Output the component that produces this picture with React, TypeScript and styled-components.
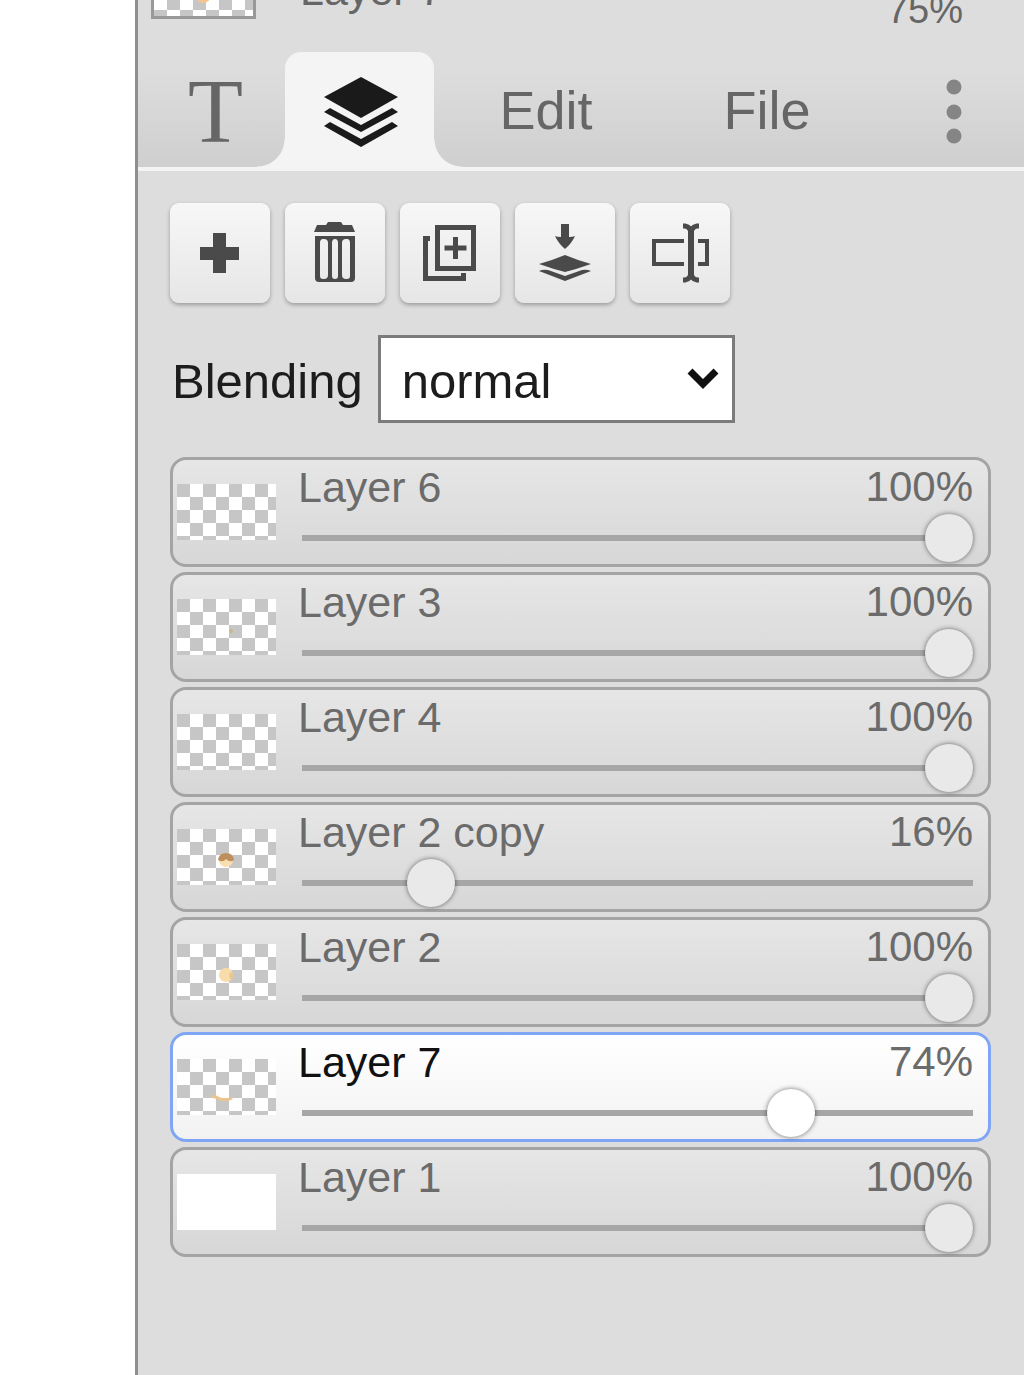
import React, { useState } from "react";
import styled, { createGlobalStyle, css } from "styled-components";

const GlobalStyle = createGlobalStyle`
  *, *::before, *::after { box-sizing: border-box; }
  body {
    margin: 0;
    background: #fff;
    font-family: "Liberation Sans", Arial, Helvetica, sans-serif;
  }
`;

const Workspace = styled.div`
  display: flex;
  min-height: 100vh;
  padding-left: 135px;
`;

const Panel = styled.aside`
  flex: 1;
  min-width: 0;
  border-left: 3px solid #8f8f8f;
  background: #ddd;
`;

const checker = css`
  background: repeating-conic-gradient(#fff 0 25%, #c6c6c6 0 50%) 0 0 / 26px 26px;
`;

const ToolSummary = styled.header`
  display: flex;
  align-items: flex-end;
  height: 52px;
  padding: 0 61px 20px 13px;
  overflow: hidden;
  color: #666;
  line-height: 44px;
`;

const SummaryThumb = styled.svg`
  width: 105px;
  height: 60px;
  margin-bottom: 13px;
  border: 3px solid #999;
  ${checker}
  background-position: 0 22px;
`;

const SummaryName = styled.span`
  flex: 1;
  padding-left: 44px;
  margin-bottom: 20px;
  font-size: 43px;
`;

const SummaryValue = styled.span`
  font-size: 38px;
`;

const TabBar = styled.nav`
  display: grid;
  grid-template-columns: 147fr 149fr 224fr 218fr 148fr;
  height: 119px;
  border-bottom: 4px solid #f4f4f4;
  background: linear-gradient(#ddd 15%, #cfcfcf);
`;

const Tab = styled.button<{ $active?: boolean; $serif?: boolean; $outer?: boolean }>`
  position: relative;
  display: flex;
  align-items: center;
  justify-content: center;
  padding: ${(p) => (p.$outer ? "4px 0 0 8px" : p.$active ? "4px 0 0 2px" : "0")};
  border: 0;
  border-radius: 16px 16px 0 0;
  background: ${(p) => (p.$active ? "#f4f4f4" : "transparent")};
  color: #666;
  font-family: ${(p) => (p.$serif ? '"Liberation Serif", "Times New Roman", serif' : "inherit")};
  font-size: ${(p) => (p.$serif ? 90 : 54)}px;
  line-height: 1;
  cursor: pointer;

  ${(p) =>
    p.$active &&
    css`
      &::before,
      &::after {
        content: "";
        position: absolute;
        bottom: 0;
        width: 28px;
        height: 28px;
      }
      &::before {
        right: 100%;
        background: radial-gradient(circle at 0 0, transparent 27px, #f4f4f4 28px);
      }
      &::after {
        left: 100%;
        background: radial-gradient(circle at 100% 0, transparent 27px, #f4f4f4 28px);
      }
    `}
`;

const Content = styled.div`
  display: flex;
  flex-direction: column;
  gap: 32px;
  padding: 32px 33px 32px 32px;
`;

const Toolbar = styled.div`
  display: flex;
  gap: 15px;
`;

const ToolButton = styled.button`
  display: grid;
  place-items: center;
  width: 100px;
  height: 100px;
  padding: 0;
  border: 0;
  border-radius: 9px;
  background: linear-gradient(#f7f7f7, #e6e6e6);
  box-shadow: 0 2px 4px rgba(0, 0, 0, 0.3);
  color: #4a4a4a;
  cursor: pointer;
`;

const BlendRow = styled.div`
  display: flex;
  align-items: center;
  gap: 15px;
  padding-left: 2px;
  color: #1c1c1c;
  font-size: 49px;
`;

const BlendLabel = styled.label`
  padding-top: 3px;
`;

const SelectWrap = styled.div`
  position: relative;
  flex: 0 1 357px;
`;

const Select = styled.select`
  appearance: none;
  display: block;
  width: 100%;
  height: 88px;
  padding: 3px 60px 0 21px;
  border: 3px solid #7b7b7b;
  border-radius: 0;
  background: #fff;
  color: #1c1c1c;
  font: inherit;
`;

const Chevron = styled.svg`
  position: absolute;
  top: 32px;
  right: 16px;
  pointer-events: none;
`;

const LayerList = styled.ul`
  display: flex;
  flex-direction: column;
  gap: 5px;
  margin: 2px 0 0;
  padding: 0;
  list-style: none;
`;

const LayerRow = styled.li<{ $selected: boolean }>`
  display: grid;
  grid-template-columns: 99px 1fr;
  align-items: center;
  column-gap: 22px;
  padding: 2px 15px 2px 4px;
  border: 3px solid ${(p) => (p.$selected ? "#7ea6f4" : "#a4a4a4")};
  border-radius: 16px;
  background: ${(p) =>
    p.$selected ? "linear-gradient(#fff, #f2f2f2)" : "linear-gradient(#e6e6e6, #d7d7d7)"};
`;

const Preview = styled.svg<{ $opaque: boolean }>`
  display: block;
  width: 99px;
  height: 56px;
  ${(p) => (p.$opaque ? "background: #fff;" : checker)}
`;

const LayerBody = styled.div`
  display: flex;
  flex-direction: column;
  gap: 2px;
  min-width: 0;
`;

const LayerLine = styled.div`
  display: flex;
  justify-content: space-between;
  color: #6b6b6b;
  font-size: 43px;
  line-height: 50px;
`;

const LayerName = styled.label<{ $selected: boolean }>`
  color: ${(p) => (p.$selected ? "#111" : "inherit")};
`;

const LayerValue = styled.span`
  font-size: 42px;
`;

const thumb = css<{ $selected: boolean }>`
  width: 48px;
  height: 48px;
  border: 0;
  border-radius: 50%;
  background: ${(p) => (p.$selected ? "#fff" : "#e9e9e9")};
  box-shadow: 0 0 5px rgba(0, 0, 0, 0.55);
`;

const Slider = styled.input<{ $selected: boolean }>`
  appearance: none;
  display: block;
  height: 48px;
  margin: 0 0 0 4px;
  background: linear-gradient(#a6a6a6, #a6a6a6) center / 100% 6px no-repeat;
  cursor: pointer;

  &::-webkit-slider-thumb {
    appearance: none;
    ${thumb}
  }
  &::-moz-range-thumb {
    ${thumb}
  }
`;

type Layer = { id: number; name: string; opacity: number; opaque?: boolean; art?: React.ReactNode };

const initialLayers: Layer[] = [
  { id: 6, name: "Layer 6", opacity: 100 },
  { id: 3, name: "Layer 3", opacity: 100, art: <circle cx="54" cy="32" r="2" fill="#cfb489" /> },
  { id: 4, name: "Layer 4", opacity: 100 },
  {
    id: 8,
    name: "Layer 2 copy",
    opacity: 16.8,
    art: (
      <>
        <circle cx="49" cy="31" r="7" fill="#f9dfb0" />
        <path d="M41 31q1-7 8-7 7 0 8 7-4 3-8-1-3 4-8 1z" fill="#bd8f5c" />
      </>
    ),
  },
  {
    id: 2,
    name: "Layer 2",
    opacity: 100,
    art: (
      <>
        <circle cx="49" cy="31" r="7" fill="#f8dcaa" />
        <path d="M53 28q6 2 2 8-4-2-2-8z" fill="#e6c78f" />
      </>
    ),
  },
  {
    id: 7,
    name: "Layer 7",
    opacity: 74.7,
    art: <path d="M34 37q6 1 9 3 6 2 12-1" fill="none" stroke="#e8c593" strokeWidth="3" />,
  },
  { id: 1, name: "Layer 1", opacity: 100, opaque: true },
];

const LayersIcon = () => (
  <svg width="76" height="72" viewBox="0 0 76 72" fill="#1a1a1a" aria-hidden="true">
    <path d="M38 1 75 21 38 42 1 21z" />
    <path d="M1 36 7 32 38 49 69 32 75 36 38 56z" />
    <path d="M1 50 7 46 38 63 69 46 75 50 38 71z" />
  </svg>
);

const MoreIcon = () => (
  <svg width="16" height="66" viewBox="0 0 16 66" fill="#858585" aria-hidden="true">
    <circle cx="8" cy="8" r="7.500" />
    <circle cx="8" cy="33" r="7.500" />
    <circle cx="8" cy="57" r="7.500" />
  </svg>
);

const AddIcon = () => (
  <svg width="60" height="60" viewBox="0 0 60 60" fill="currentColor" aria-hidden="true">
    <path d="M23 10h13v14h13v13H36v13H23V37H10V24h13z" />
  </svg>
);

const TrashIcon = () => (
  <svg width="62" height="64" viewBox="1 0 62 64" fill="currentColor" aria-hidden="true">
    <path d="M23 4l2-3h13l2 3h9l3 7H11l3-7z" />
    <path
      fillRule="evenodd"
      d="M12 15h40v42q0 4-4 4H16q-4 0-4-4zM17 22v33q0 3 3 3h1q4 0 4-4V22q0-4-4-4h-1q-3 0-3 4zm12 0v33q0 3 3 3 3 0 3-3V22q0-4-3-4-3 0-3 4zm10 0v32q0 4 4 4h1q3 0 3-3V22q0-4-3-4h-1q-4 0-4 4z"
    />
  </svg>
);

const DuplicateIcon = () => (
  <svg width="60" height="60" viewBox="0 0 60 60" fill="none" stroke="currentColor" strokeWidth="5" aria-hidden="true">
    <path d="M17.500 4.500h36v41h-36z" />
    <path d="M10 15.500H5.500v40H43.500V50" />
    <path d="M35.500 14v22M24.500 25h22" />
  </svg>
);

const MergeIcon = () => (
  <svg width="56" height="60" viewBox="0 0 56 60" fill="currentColor" aria-hidden="true">
    <path d="M24 1h8v13q4 0 6-1-3 7-10 13-7-6-10-13 2 1 6 1z" />
    <path d="M28 32q12 5 26 9-14 5-26 8-12-3-26-8 14-4 26-9z" />
    <path d="M2 48q4-2 9-1l17 6 17-6q5-1 9 1-13 5-26 10Q15 53 2 48z" />
  </svg>
);

const RenameIcon = () => (
  <svg width="60" height="62" viewBox="0 0 60 62" fill="none" stroke="currentColor" strokeWidth="4" aria-hidden="true">
    <path d="M34 19H4v23h30M48 19h9v23h-9" />
    <path d="M41 9v44" strokeWidth="6" />
    <path d="M33 4h2q6 1 6 8 0-7 6-8h2M33 58h2q6-1 6-8 0 7 6 8h2" strokeWidth="5" />
  </svg>
);

const tools = [
  { label: "New layer", Icon: AddIcon },
  { label: "Delete layer", Icon: TrashIcon },
  { label: "Duplicate layer", Icon: DuplicateIcon },
  { label: "Merge down", Icon: MergeIcon },
  { label: "Rename layer", Icon: RenameIcon },
];

export default function App() {
  const [layers, setLayers] = useState(initialLayers);
  const [selected, setSelected] = useState(7);

  const setOpacity = (id: number, opacity: number) =>
    setLayers((all) => all.map((l) => (l.id === id ? { ...l, opacity } : l)));

  return (
    <>
      <GlobalStyle />
      <Workspace>
        <Panel>
          <ToolSummary>
            <SummaryThumb viewBox="0 0 99 54" aria-hidden="true">
              <circle cx="49" cy="33" r="8" fill="#f0c592" />
            </SummaryThumb>
            <SummaryName>Layer 7</SummaryName>
            <SummaryValue>75%</SummaryValue>
          </ToolSummary>
          <TabBar>
            <Tab $serif $outer>
              T
            </Tab>
            <Tab $active aria-label="Layers">
              <LayersIcon />
            </Tab>
            <Tab>Edit</Tab>
            <Tab>File</Tab>
            <Tab $outer aria-label="More">
              <MoreIcon />
            </Tab>
          </TabBar>
          <Content>
            <Toolbar>
              {tools.map(({ label, Icon }) => (
                <ToolButton key={label} aria-label={label}>
                  <Icon />
                </ToolButton>
              ))}
            </Toolbar>
            <BlendRow>
              <BlendLabel htmlFor="blend">Blending</BlendLabel>
              <SelectWrap>
                <Select id="blend" defaultValue="normal">
                  <option>normal</option>
                </Select>
                <Chevron width="32" height="22" viewBox="0 0 32 22" aria-hidden="true">
                  <path d="M3 4l13 13L29 4" fill="none" stroke="#111" strokeWidth="7" />
                </Chevron>
              </SelectWrap>
            </BlendRow>
            <LayerList>
              {layers.map((l) => {
                const active = l.id === selected;
                return (
                  <LayerRow key={l.id} $selected={active} onClick={() => setSelected(l.id)}>
                    <Preview $opaque={!!l.opaque} viewBox="0 0 99 56" aria-hidden="true">
                      {l.art}
                    </Preview>
                    <LayerBody>
                      <LayerLine>
                        <LayerName htmlFor={`layer-${l.id}`} $selected={active}>
                          {l.name}
                        </LayerName>
                        <LayerValue>{Math.floor(l.opacity)}%</LayerValue>
                      </LayerLine>
                      <Slider
                        id={`layer-${l.id}`}
                        type="range"
                        min={0}
                        max={100}
                        step={0.1}
                        value={l.opacity}
                        $selected={active}
                        onChange={(e) => setOpacity(l.id, Number(e.target.value))}
                      />
                    </LayerBody>
                  </LayerRow>
                );
              })}
            </LayerList>
          </Content>
        </Panel>
      </Workspace>
    </>
  );
}
